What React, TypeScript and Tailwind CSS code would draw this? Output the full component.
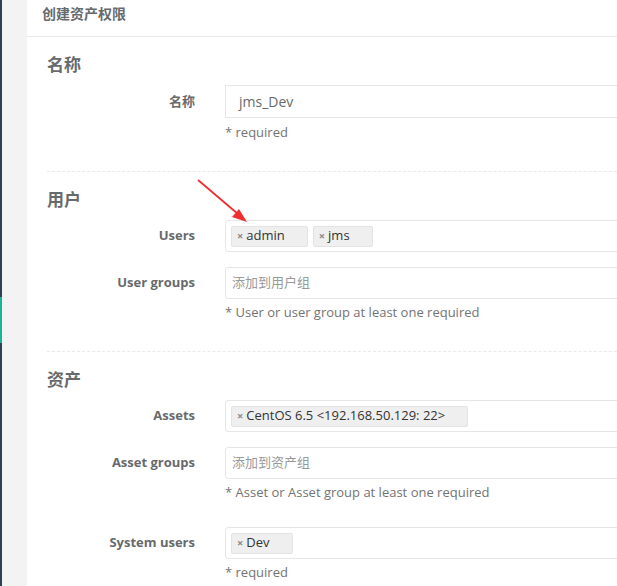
import React from 'react';

const font = { fontFamily: '"Open Sans", "Noto Sans CJK SC", sans-serif' };

const Tag = ({ text }: { text: string }) => (
  <span className="flex items-center h-[21px] pl-[5px] pr-[22px] bg-[#efefef] border border-[#e3e3e3] rounded-[2px] text-[13px] text-[#333]">
    <span className="text-[11px] text-[#888] mr-[3px] font-bold">×</span>
    {text}
  </span>
);

const Row = ({ label, children, className = '' }: { label: string; children: React.ReactNode; className?: string }) => (
  <div className={`flex items-center ${className}`}>
    <label className="w-[148px] text-right text-[13px] font-bold text-[#676a6c] shrink-0">{label}</label>
    <div className="ml-[30px] flex-1">{children}</div>
  </div>
);

const Box = ({ children }: { children: React.ReactNode }) => (
  <div className="h-[32px] border border-[#e5e6e7] rounded-[3px] flex items-center gap-[5px] pl-[5px] bg-white">
    {children}
  </div>
);

const Placeholder = ({ text }: { text: string }) => (
  <span className="text-[13px] text-[#999] pl-[1px]">{text}</span>
);

const Help = ({ text, className = '' }: { text: string; className?: string }) => (
  <div className={`ml-[178px] text-[13px] leading-[18px] text-[#737373] ${className}`}>{text}</div>
);

const Heading = ({ text, className = '' }: { text: string; className?: string }) => (
  <h3 className={`text-[17px] leading-[20px] font-semibold text-[#676a6c] ${className}`}>{text}</h3>
);

const App: React.FC = () => {
  return (
    <div className="w-[617px] h-[586px] overflow-hidden flex bg-[#f3f3f4]" style={font}>
      {/* Sidebar edge */}
      <div className="w-[2px] bg-[#2f4050] flex flex-col shrink-0">
        <div className="h-[297px]" />
        <div className="h-[46px] bg-[#1ab394]" />
      </div>
      <div className="w-[25px] shrink-0" />

      {/* Panel */}
      <div className="relative w-[660px] shrink-0 bg-white">
        <div className="h-[37px] border-b border-[#e7eaec] pl-[15px] pt-[1px]">
          <span className="text-[14px] leading-[18px] font-semibold text-[#676a6c]">创建资产权限</span>
        </div>

        <div className="pl-[20px]">
          <Heading text="名称" className="mt-[18px]" />
          <Row label="名称" className="mt-[10px]">
            <div className="h-[33px] border border-[#e5e6e7] flex items-center pl-[13px] text-[14px] text-[#676a6c]">
              jms_Dev
            </div>
          </Row>
          <Help text="* required" className="mt-[5px]" />

          <div className="mt-[30px] border-t border-dashed border-[#e7eaec]" />

          <Heading text="用户" className="mt-[18px]" />
          <Row label="Users" className="mt-[10px]">
            <Box>
              <Tag text="admin" />
              <Tag text="jms" />
            </Box>
          </Row>
          <Row label="User groups" className="mt-[15px]">
            <Box>
              <Placeholder text="添加到用户组" />
            </Box>
          </Row>
          <Help text="* User or user group at least one required" className="mt-[4px]" />

          <div className="mt-[30px] border-t border-dashed border-[#e7eaec]" />

          <Heading text="资产" className="mt-[18px]" />
          <Row label="Assets" className="mt-[10px]">
            <Box>
              <Tag text="CentOS 6.5 <192.168.50.129: 22>" />
            </Box>
          </Row>
          <Row label="Asset groups" className="mt-[15px]">
            <Box>
              <Placeholder text="添加到资产组" />
            </Box>
          </Row>
          <Help text="* Asset or Asset group at least one required" className="mt-[4px]" />
          <Row label="System users" className="mt-[26px]">
            <Box>
              <Tag text="Dev" />
            </Box>
          </Row>
          <Help text="* required" className="mt-[4px]" />
        </div>

        {/* Annotation arrow */}
        <svg className="absolute left-[165px] top-[175px] pointer-events-none" width="90" height="60" viewBox="0 0 90 60">
          <line x1="6" y1="5" x2="46" y2="39" stroke="#ef2f2f" strokeWidth="1.8" />
          <polygon points="55,47 40,42 47,34" fill="#ef2f2f" />
        </svg>
      </div>
    </div>
  );
};

export default App;
